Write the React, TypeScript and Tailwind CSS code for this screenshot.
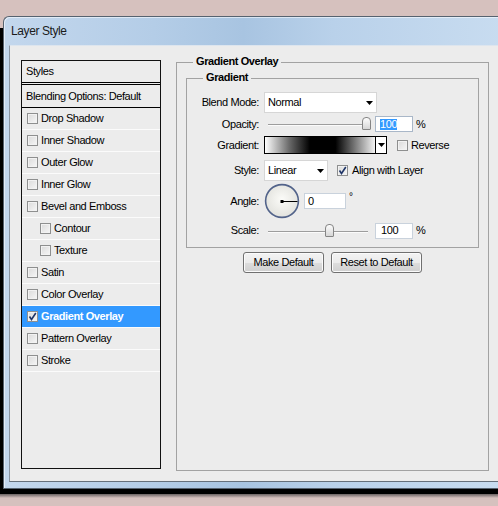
import React from 'react';

type Item = { label: string; indent?: boolean; checked?: boolean; selected?: boolean };

const styleItems: Item[] = [
  { label: 'Drop Shadow' },
  { label: 'Inner Shadow' },
  { label: 'Outer Glow' },
  { label: 'Inner Glow' },
  { label: 'Bevel and Emboss' },
  { label: 'Contour', indent: true },
  { label: 'Texture', indent: true },
  { label: 'Satin' },
  { label: 'Color Overlay' },
  { label: 'Gradient Overlay', checked: true, selected: true },
  { label: 'Pattern Overlay' },
  { label: 'Stroke' },
];

function CheckBox({ checked }: { checked?: boolean }) {
  return (
    <span className="flex h-[11px] w-[11px] shrink-0 items-center justify-center border border-[#8e8f8f] bg-linear-to-br from-[#dadada] to-[#f7f7f7] shadow-[inset_0_0_0_1px_#f2f2f2]">
      {checked && (
        <svg width="9" height="9" viewBox="0 0 9 9">
          <path d="M1.5 4.5 L3.5 7.5 L7.8 1" fill="none" stroke="#1f3567" strokeWidth="1.6" />
        </svg>
      )}
    </span>
  );
}

function Arrow() {
  return (
    <svg width="7" height="4" viewBox="0 0 7 4">
      <polygon points="0,0 7,0 3.5,4" fill="#000" />
    </svg>
  );
}

function Slider({ thumb }: { thumb: number }) {
  return (
    <div className="relative h-full w-[111px]">
      <div className="absolute left-[4px] top-[8px] h-[2px] w-[100px] border-t border-[#9d9d9d] bg-[#fbfbfb]" />
      <div
        className="absolute top-[1px] h-[13px] w-[9px] rounded-t-[4px] rounded-b-[1px] border border-[#858585] bg-linear-to-b from-[#fdfdfd] to-[#d6d6d6]"
        style={{ left: thumb }}
      />
    </div>
  );
}

function Label({ children }: { children: React.ReactNode }) {
  return <span className="w-[72px] shrink-0 text-right">{children}</span>;
}

function Dial() {
  return (
    <svg width="36" height="36" viewBox="0 0 36 36">
      <defs>
        <radialGradient id="dialFill" cx="50%" cy="45%" r="55%">
          <stop offset="0%" stopColor="#fbfbf8" />
          <stop offset="100%" stopColor="#e2e2dd" />
        </radialGradient>
      </defs>
      <circle cx="18" cy="18" r="16.4" fill="url(#dialFill)" stroke="#52638a" strokeWidth="1.6" />
      <line x1="18" y1="18.5" x2="33.5" y2="18.5" stroke="#000" strokeWidth="1" />
      <rect x="16.5" y="17" width="3" height="3" fill="#000" />
    </svg>
  );
}

export default function App() {
  return (
    <div className="relative h-[506px] w-[498px] overflow-hidden bg-[#d6c1be] font-['Liberation_Sans',Arial,sans-serif] text-[11px] tracking-[-0.4px] text-black">
      {/* shadow behind the dialog */}
      <div className="absolute left-0 top-[28px] h-[466px] w-[498px] bg-black" />
      <div className="absolute left-0 top-[494px] h-[4px] w-[498px] bg-linear-to-b from-[#6a6262] to-[#d6c1be]" />

      {/* dialog window */}
      <div className="absolute left-[3px] top-[16px] flex h-[473px] w-[500px] flex-col rounded-tl-[6px] border border-r-0 border-[#56626f] bg-[linear-gradient(90deg,#c3d7ed_0%,#b4cde7_30%,#a8c4e1_48%,#b9d1ea_66%,#c8dcf0_100%)] shadow-[inset_1px_1px_0_rgba(255,255,255,0.55)]">
        <div className="flex h-[28px] items-center pl-[7px] text-[12px] text-[#1b1b1b]">Layer Style</div>

        <div className="flex flex-1 pb-[6px] pl-[5px]">
          <div className="flex flex-1 items-start border-b border-l border-t border-b-[#66707b] border-l-[#8994a1] border-t-[#dde5ee] bg-[#ececec] pl-[11px] pt-[14px]">
            {/* styles list */}
            <div className="flex h-[409px] w-[140px] shrink-0 flex-col border border-[#111]">
              <div className="flex h-[24px] items-center border-b-[3px] border-double border-black pb-[1px] pl-[4px]">Styles</div>
              <div className="flex h-[23px] items-center border-b border-black pl-[4px]">Blending Options: Default</div>
              {styleItems.map(item => (
                <div
                  key={item.label}
                  className={`flex h-[22px] items-center gap-[3px] border-b border-[#fbfbfb] ${item.indent ? 'pl-[18px]' : 'pl-[5px]'} ${item.selected ? 'bg-[#3399ff] font-bold text-white' : ''}`}
                >
                  <CheckBox checked={item.checked} />
                  <span>{item.label}</span>
                </div>
              ))}
            </div>

            {/* Gradient Overlay group */}
            <div className="relative ml-[15px] mt-[2px] h-[409px] w-[313px] shrink-0 border border-[#a2a2a2] px-[9px] pt-[15px]">
              <span className="absolute left-[16px] top-[-8px] bg-[#ececec] px-[3px] font-bold leading-[13px]">Gradient Overlay</span>

              <div className="relative w-[293px] border border-[#a2a2a2] pb-[8px] pt-[13px]">
                <span className="absolute left-[16px] top-[-8px] bg-[#ececec] px-[3px] font-bold leading-[13px]">Gradient</span>

                <div className="flex h-[21px] items-center">
                  <Label>Blend Mode:</Label>
                  <div className="ml-[5px] flex h-[21px] w-[113px] items-center justify-between border border-[#d6d6d6] bg-white pl-[3px] pr-[3px]">
                    <span>Normal</span>
                    <Arrow />
                  </div>
                </div>

                <div className="mt-[3px] flex h-[16px] items-center">
                  <Label>Opacity:</Label>
                  <div className="ml-[5px] h-[16px]">
                    <Slider thumb={98} />
                  </div>
                  <div className="flex h-[16px] w-[38px] items-center border border-[#a9b7c8] bg-white pl-[4px]">
                    <span className="bg-[#3399ff] leading-[11px] text-white">100</span>
                  </div>
                  <span className="ml-[3px]">%</span>
                </div>

                <div className="mt-[4px] flex h-[18px] items-center">
                  <Label>Gradient:</Label>
                  <div className="ml-[5px] flex h-[18px] w-[123px] border border-black">
                    <div className="flex-1 bg-[linear-gradient(90deg,#ffffff_0%,#6a6a6a_22%,#000000_41%,#000000_64%,#7a7a7a_82%,#f4f4f4_100%)]" />
                    <div className="flex w-[11px] items-center justify-center border-l border-black bg-white">
                      <Arrow />
                    </div>
                  </div>
                  <div className="ml-[10px] flex items-center gap-[3px]">
                    <CheckBox />
                    <span>Reverse</span>
                  </div>
                </div>

                <div className="mt-[6px] flex h-[21px] items-center">
                  <Label>Style:</Label>
                  <div className="ml-[5px] flex h-[21px] w-[64px] items-center justify-between border border-[#d6d6d6] bg-white pl-[3px] pr-[3px]">
                    <span>Linear</span>
                    <Arrow />
                  </div>
                  <div className="ml-[9px] flex items-center gap-[4px]">
                    <CheckBox checked />
                    <span>Align with Layer</span>
                  </div>
                </div>

                <div className="mt-[2px] flex h-[36px] items-center">
                  <Label>Angle:</Label>
                  <div className="ml-[5px]">
                    <Dial />
                  </div>
                  <div className="ml-[4px] flex h-[16px] w-[42px] items-center border border-[#c9d2dc] bg-white pl-[3px]">0</div>
                  <span className="mb-[9px] ml-[3px] text-[10px]">°</span>
                </div>

                <div className="mt-[3px] flex h-[17px] items-center">
                  <Label>Scale:</Label>
                  <div className="ml-[5px] h-[16px]">
                    <Slider thumb={61} />
                  </div>
                  <div className="flex h-[16px] w-[38px] items-center border border-[#c9d2dc] bg-white pl-[5px]">100</div>
                  <span className="ml-[3px]">%</span>
                </div>
              </div>

              <div className="mt-[4px] flex justify-center gap-[7px]">
                <div className="flex h-[21px] w-[81px] items-center justify-center rounded-[3px] border border-[#707070] bg-[linear-gradient(180deg,#f3f3f3_0%,#ebebeb_50%,#dddddd_51%,#cfcfcf_100%)] shadow-[inset_0_0_0_1px_#fbfbfb]">
                  Make Default
                </div>
                <div className="flex h-[21px] w-[91px] items-center justify-center rounded-[3px] border border-[#707070] bg-[linear-gradient(180deg,#f3f3f3_0%,#ebebeb_50%,#dddddd_51%,#cfcfcf_100%)] shadow-[inset_0_0_0_1px_#fbfbfb]">
                  Reset to Default
                </div>
              </div>
            </div>
          </div>
        </div>
      </div>
    </div>
  );
}
